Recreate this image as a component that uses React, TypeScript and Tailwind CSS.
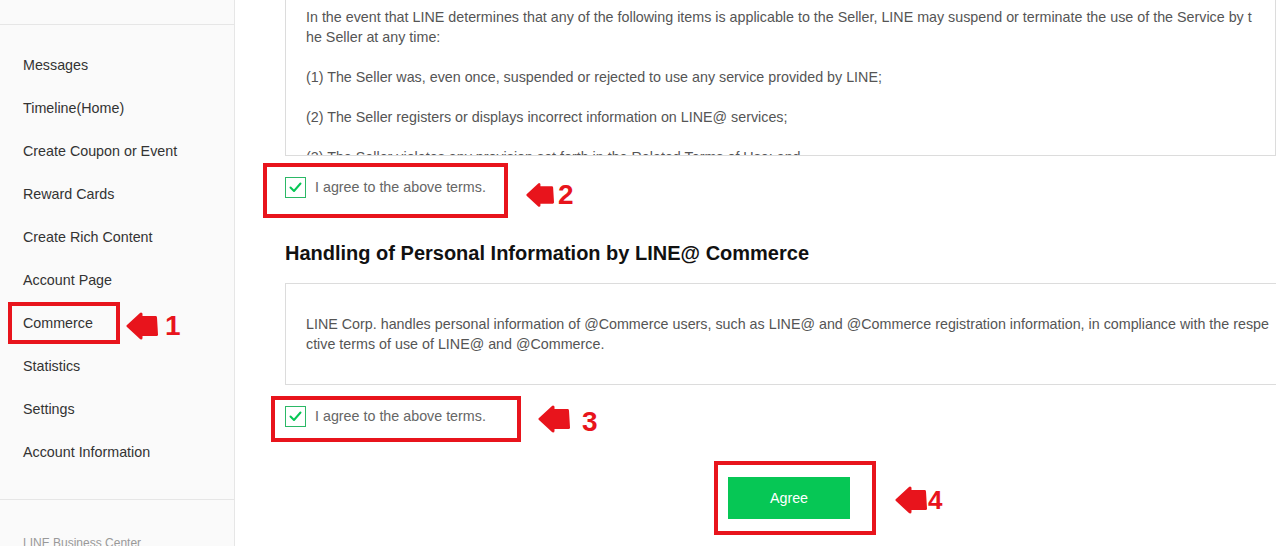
import React from 'react';

const navItems = [
  'Messages',
  'Timeline(Home)',
  'Create Coupon or Event',
  'Reward Cards',
  'Create Rich Content',
  'Account Page',
  'Commerce',
  'Statistics',
  'Settings',
  'Account Information',
];

const terms = [
  'In the event that LINE determines that any of the following items is applicable to the Seller, LINE may suspend or terminate the use of the Service by the Seller at any time:',
  '(1) The Seller was, even once, suspended or rejected to use any service provided by LINE;',
  '(2) The Seller registers or displays incorrect information on LINE@ services;',
  '(3) The Seller violates any provision set forth in the Related Terms of Use; and',
];

const Checkbox: React.FC = () => (
  <span className="w-[21px] h-[21px] border border-[#2bb866] bg-white flex items-center justify-center shrink-0">
    <svg width="15" height="15" viewBox="0 0 15 15" fill="none">
      <polyline points="2.5,7.5 6,11 12.5,3.5" stroke="#06c755" strokeWidth="2" strokeLinecap="round" strokeLinejoin="round" />
    </svg>
  </span>
);

const AgreeRow: React.FC = () => (
  <div className="flex items-center gap-[9px] h-[22px]">
    <Checkbox />
    <span className="text-[14.3px] text-[#666] pt-[1px]">I agree to the above terms.</span>
  </div>
);

// chunky red arrow pointing left, used for the step callouts
const Arrow: React.FC<{ className: string }> = ({ className }) => (
  <svg className={className} viewBox="0 0 32 28" fill="#e8141c">
    <path
      d="M2 14 L15 2 L15 5.5 L29.5 5.5 L30.5 22.5 L15 22.5 L15 26 Z"
      stroke="#e8141c"
      strokeWidth="3"
      strokeLinejoin="round"
    />
  </svg>
);

export default function App() {
  return (
    <div
      className="relative flex w-[1276px] h-[546px] overflow-hidden bg-white"
      style={{ fontFamily: '"Liberation Sans", Arial, sans-serif' }}
    >
      <aside className="w-[235px] shrink-0 bg-[#fafafa] border-r border-[#e6e6e6] overflow-hidden">
        <div className="h-[25px] border-b border-[#e6e6e6]" />
        <nav className="pt-[19px]">
          {navItems.map((item) => (
            <div key={item} className="h-[43px] flex items-center pl-[23px] text-[14.3px] text-[#333]">
              {item}
            </div>
          ))}
        </nav>
        <div className="mt-[25px] border-t border-[#e6e6e6] pt-[34px] pl-[23px] text-[12px] text-[#999]">
          LINE Business Center
        </div>
      </aside>

      <main className="flex-1 pl-[50px] overflow-hidden">
        <div className="w-[991px] h-[156px] border-x border-b border-[#dcdcdc] overflow-hidden pl-[20px] pr-[20px] pt-[7px] text-[14.3px] leading-[20px] text-[#555] break-all">
          {terms.map((t) => (
            <p key={t} className="mb-[20px]">{t}</p>
          ))}
        </div>

        <div className="mt-[20px]">
          <AgreeRow />
        </div>

        <h2 className="mt-[43px] text-[20px] leading-[24px] font-bold text-[#111]">
          Handling of Personal Information by LINE@ Commerce
        </h2>

        <div className="mt-[18px] w-[1005px] border border-[#dcdcdc] py-[30px] pl-[20px] pr-[20px] text-[14.3px] leading-[20px] text-[#555] break-all">
          LINE Corp. handles personal information of @Commerce users, such as LINE@ and @Commerce registration information, in compliance with the respective terms of use of LINE@ and @Commerce.
        </div>

        <div className="mt-[20px]">
          <AgreeRow />
        </div>

        <div className="mt-[50px] pl-[443px]">
          <button className="w-[122px] h-[42px] bg-[#06c755] text-white text-[14.3px] pt-[1px]">Agree</button>
        </div>
      </main>

      {/* step callouts drawn over the page */}
      <div className="absolute left-[8px] top-[302px] flex items-center">
        <div className="w-[112px] h-[42px] border-4 border-[#e8141c]" />
        <div className="flex items-center mt-[6px] ml-[6px] gap-[7px]">
          <Arrow className="w-[32px] h-[28px]" />
          <span className="text-[#e8141c] font-bold text-[28px] leading-none">1</span>
        </div>
      </div>

      <div className="absolute left-[263px] top-[163px] flex items-center">
        <div className="w-[245px] h-[55px] border-4 border-[#e8141c]" />
        <div className="flex items-center mt-[9px] ml-[18px] gap-[4px]">
          <Arrow className="w-[28px] h-[28px]" />
          <span className="text-[#e8141c] font-bold text-[28px] leading-none">2</span>
        </div>
      </div>

      <div className="absolute left-[271px] top-[396px] flex items-center">
        <div className="w-[250px] h-[46px] border-4 border-[#e8141c]" />
        <div className="flex items-center ml-[17px] gap-[12px]">
          <Arrow className="w-[32px] h-[30px]" />
          <span className="text-[#e8141c] font-bold text-[28px] leading-none mt-[6px]">3</span>
        </div>
      </div>

      <div className="absolute left-[714px] top-[461px] flex items-center">
        <div className="w-[162px] h-[74px] border-4 border-[#e8141c]" />
        <div className="flex items-center mt-[4px] ml-[19px] gap-[1px]">
          <Arrow className="w-[32px] h-[30px]" />
          <span className="text-[#e8141c] font-bold text-[26px] leading-none">4</span>
        </div>
      </div>
    </div>
  );
}
